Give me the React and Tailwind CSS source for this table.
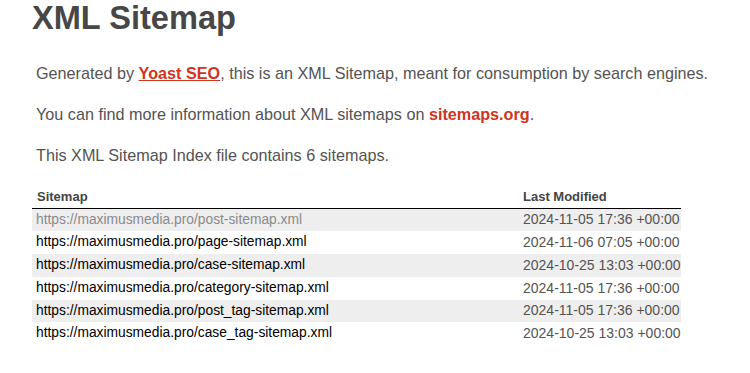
export default function App() {
  const rows = [
    ["https://maximusmedia.pro/post-sitemap.xml", "2024-11-05 17:36 +00:00"],
    ["https://maximusmedia.pro/page-sitemap.xml", "2024-11-06 07:05 +00:00"],
    ["https://maximusmedia.pro/case-sitemap.xml", "2024-10-25 13:03 +00:00"],
    ["https://maximusmedia.pro/category-sitemap.xml", "2024-11-05 17:36 +00:00"],
    ["https://maximusmedia.pro/post_tag-sitemap.xml", "2024-11-05 17:36 +00:00"],
    ["https://maximusmedia.pro/case_tag-sitemap.xml", "2024-10-25 13:03 +00:00"],
  ];
  return (
    <div className="w-[750px] h-[373px] bg-white overflow-hidden font-['Liberation_Sans',Arial,sans-serif] text-[#545353]">
      <div className="pl-[32px]">
        <h1 className="text-[32.6px] leading-[36px] font-bold text-[#474747]">XML Sitemap</h1>
        <div className="pl-[4px] text-[16.2px] leading-[20px] text-[#545353]">
          <p className="mt-[26.5px]">
            Generated by{" "}
            <a className="font-bold text-[#d0351d] underline">Yoast SEO</a>, this is an XML Sitemap, meant for consumption by search engines.
          </p>
          <p className="mt-[21px]">
            You can find more information about XML sitemaps on{" "}
            <a className="font-bold text-[#d0351d]">sitemaps.org</a>.
          </p>
          <p className="mt-[21px]">This XML Sitemap Index file contains 6 sitemaps.</p>
        </div>
        <div className="mt-[24px] w-[649px]">
          <div className="flex border-b-[1.5px] border-black text-[13px] leading-[16px] font-bold text-[#444] pb-[3px]">
            <div className="w-[487px] pl-[5px]">Sitemap</div>
            <div className="pl-[4px]">Last Modified</div>
          </div>
          {rows.map(([u, d], i) => (
            <div
              key={u}
              className={`flex items-center h-[22.75px] text-[14px] ${i % 2 === 0 ? "bg-[#eeeeee]" : "bg-white"}`}
            >
              <div className={`w-[487px] pl-[4px] text-[13.8px] ${i === 0 ? "text-[#8a8a8a]" : "text-black"}`}>{u}</div>
              <div className="pl-[4px] text-[#545353]">{d}</div>
            </div>
          ))}
        </div>
      </div>
    </div>
  );
}
